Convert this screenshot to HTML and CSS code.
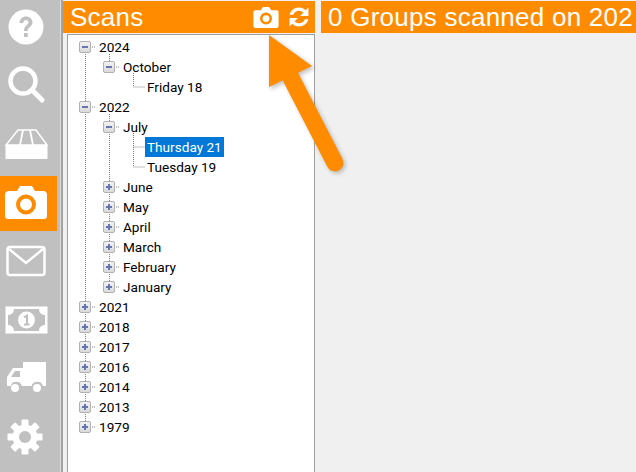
FILE: index.html
```html
<!DOCTYPE html>
<html lang="en">
<head>
<meta charset="utf-8">
<title>Scans</title>
<link rel="stylesheet" href="styles.css">
</head>
<body>
<div class="app">
  <nav class="side">
    <div class="nav-item"><svg width="44" height="44" viewBox="0 0 44 44"><circle cx="22" cy="22" r="17.500" fill="#fff"/><path d="M15.500 18c0-4 3-6.500 6.500-6.500s6.500 2.300 6.500 5.800c0 4.500-4.800 4.700-4.800 8.700h-3.700c0-5.500 4.500-5.700 4.500-8.700 0-1.500-1.100-2.400-2.500-2.400s-2.600 1-2.800 3z" fill="#c0c0c0"/><rect x="20" y="28" width="3.700" height="4" fill="#c0c0c0"/></svg></div>
    <div class="nav-item"><svg width="44" height="44" viewBox="0 0 44 44"><circle cx="19" cy="17" r="12.500" fill="none" stroke="#fff" stroke-width="4.500"/><path d="M28 26l10 10" stroke="#fff" stroke-width="5" stroke-linecap="round"/></svg></div>
    <div class="nav-item"><svg width="46" height="44" viewBox="0 0 46 44"><path d="M15 8h18l11 15H3z" fill="none" stroke="#fff" stroke-width="1.500"/><path d="M20 8l-3 15M27 8l3 15" stroke="#fff" stroke-width="1.800"/><rect x="2.500" y="23" width="42" height="14" fill="#fff"/></svg></div>
    <div class="nav-item is-active"><svg width="46" height="44" viewBox="0 0 46 44"><path d="M6 9h8l3-5h12l3 5h8a4 4 0 0 1 4 4v21a3 3 0 0 1-3 3H5a3 3 0 0 1-3-3V13a4 4 0 0 1 4-4z" fill="#fff"/><circle cx="23" cy="22.500" r="8" fill="none" stroke="#ff8c00" stroke-width="4"/></svg></div>
    <div class="nav-item"><svg width="46" height="44" viewBox="0 0 46 44"><rect x="4.500" y="8" width="37" height="28" rx="2.500" fill="none" stroke="#fff" stroke-width="2.500"/><path d="M6 10l17 14 17-14" fill="none" stroke="#fff" stroke-width="2.500"/></svg></div>
    <div class="nav-item"><svg width="46" height="44" viewBox="0 0 46 44"><path d="M2.500 8.500h42v27h-42z" fill="#fff"/><path d="M11 11h25c0 3.500 2.500 6 6 6v10c-3.500 0-6 2.500-6 6H11c0-3.500-2.500-6-6-6V17c3.500 0 6-2.500 6-6z" fill="#c0c0c0"/><circle cx="23.500" cy="22" r="8.500" fill="#fff"/><path d="M21 19.500l3-2v9M21 26.500h5.500" fill="none" stroke="#c0c0c0" stroke-width="2"/></svg></div>
    <div class="nav-item"><svg width="46" height="44" viewBox="0 0 46 44"><path d="M20 6h23v24h-3a6 6 0 0 0-11.500 0h-9.500a6 6 0 0 0-11.500 0H4V21l6-9h10zM8 21h9v-6h-5z" fill="#fff" fill-rule="evenodd"/><path d="M8 32a4 4 0 1 0 8 0 4 4 0 1 0-8 0zM30 32a4 4 0 1 0 8 0 4 4 0 1 0-8 0z" fill="#fff"/></svg></div>
    <div class="nav-item"><svg width="46" height="44" viewBox="0 0 46 44"><g transform="translate(22 22)" fill="#fff"><circle r="12.500"/><rect x="-3.500" y="-17.500" width="7" height="35" rx="1"/><rect x="-3.500" y="-17.500" width="7" height="35" rx="1" transform="rotate(45)"/><rect x="-3.500" y="-17.500" width="7" height="35" rx="1" transform="rotate(90)"/><rect x="-3.500" y="-17.500" width="7" height="35" rx="1" transform="rotate(135)"/></g><circle cx="22" cy="22" r="6" fill="#c0c0c0"/></svg></div>
  </nav>
  <div class="rule"></div>
  <section class="scans">
    <header class="bar">
      <span class="bar-title">Scans</span>
      <span class="bar-tools">
        <svg width="26" height="21" viewBox="1 1 24 20"><path d="M3 4h5l2-3h6l2 3h5a2 2 0 0 1 2 2v13a2 2 0 0 1-2 2H3a2 2 0 0 1-2-2V6a2 2 0 0 1 2-2z" fill="#fff"/><circle cx="13" cy="12" r="4.500" fill="none" stroke="#ff8c00" stroke-width="2.500"/></svg>
        <svg width="22" height="20" viewBox="2 2 18 18"><path d="M2.500 9C3.500 5 7 2.500 11 2.500c2.500 0 4.500 1 6 2.500l2.500-2.500v7.500H12l3-3c-1-1-2.500-1.700-4-1.700-2.500 0-4.500 1.500-5.200 3.700zM19.500 13c-1 4-4.500 6.500-8.500 6.500-2.500 0-4.500-1-6-2.500l-2.500 2.500V12H10l-3 3c1 1 2.500 1.700 4 1.700 2.500 0 4.500-1.500 5.200-3.700z" fill="#fff"/></svg>
      </span>
    </header>
    <div class="tree">
      <svg class="tree-lines" width="246" height="437" viewBox="0 0 246 437">
        <path d="M17.500 19V391M41.500 19V27M41.500 79V252M65.500 38V52M65.500 98V132M24 12h4M48 32h4M65.500 52h11M24 72h4M48 92h4M65.500 112h11M65.500 132h11M48 152h4M48 172h4M48 192h4M48 212h4M48 232h4M48 252h4M24 272h4M24 292h4M24 312h4M24 332h4M24 352h4M24 372h4M24 392h4" fill="none" stroke="#808080" stroke-dasharray="1 1"/>
      </svg>
      <div class="row d0"><i class="exp minus"></i><span>2024</span></div>
      <div class="row d1"><i class="exp minus"></i><span>October</span></div>
      <div class="row d2"><span>Friday 18</span></div>
      <div class="row d0"><i class="exp minus"></i><span>2022</span></div>
      <div class="row d1"><i class="exp minus"></i><span>July</span></div>
      <div class="row d2"><span class="sel">Thursday 21</span></div>
      <div class="row d2"><span>Tuesday 19</span></div>
      <div class="row d1"><i class="exp plus"></i><span>June</span></div>
      <div class="row d1"><i class="exp plus"></i><span>May</span></div>
      <div class="row d1"><i class="exp plus"></i><span>April</span></div>
      <div class="row d1"><i class="exp plus"></i><span>March</span></div>
      <div class="row d1"><i class="exp plus"></i><span>February</span></div>
      <div class="row d1"><i class="exp plus"></i><span>January</span></div>
      <div class="row d0"><i class="exp plus"></i><span>2021</span></div>
      <div class="row d0"><i class="exp plus"></i><span>2018</span></div>
      <div class="row d0"><i class="exp plus"></i><span>2017</span></div>
      <div class="row d0"><i class="exp plus"></i><span>2016</span></div>
      <div class="row d0"><i class="exp plus"></i><span>2014</span></div>
      <div class="row d0"><i class="exp plus"></i><span>2013</span></div>
      <div class="row d0"><i class="exp plus"></i><span>1979</span></div>
    </div>
  </section>
  <section class="groups">
    <header class="bar"><span class="bar-title">0 Groups scanned on 202</span></header>
  </section>
  <svg class="arrow" width="100" height="150" viewBox="0 0 100 150">
    <g class="arrow-shadow"><path d="M4 5L47 36 4 57z"/><path d="M24 44L70 133" stroke-width="17" stroke-linecap="round"/></g>
    <path d="M4 5L47 36 4 57z" fill="#ff8c00"/>
    <path d="M24 44L70 133" stroke="#ff8c00" stroke-width="17" stroke-linecap="round"/>
  </svg>
</div>
</body>
</html>
```
FILE: styles.css
```css
html, body {
  margin: 0;
  padding: 0;
  height: 100%;
  overflow: hidden;
}
.app {
  position: relative;
  display: flex;
  width: 636px;
  height: 472px;
  background: #f0f0f0;
  font-family: Roboto, "Liberation Sans", sans-serif;
}
.side {
  width: 60px;
  flex: none;
  background: #c0c0c0;
  display: flex;
  flex-direction: column;
  box-sizing: border-box;
  overflow: hidden;
}
.nav-item {
  width: 57px;
  height: 58.500px;
  box-sizing: border-box;
  padding-right: 5px;
  display: flex;
  align-items: center;
  justify-content: center;
  flex: none;
}
.nav-item:first-child {
  margin-top: -2px;
}
.nav-item.is-active {
  background: #ff8c00;
  height: 55px;
  margin: 2.500px 0 1px;
}
.rule {
  width: 3px;
  flex: none;
  background: #a4a4a4;
  border-left: 1px solid #dcdcdc;
  box-sizing: border-box;
}
.scans {
  width: 252px;
  flex: none;
  display: flex;
  flex-direction: column;
}
.groups {
  flex: 1;
  min-width: 0;
  margin-left: 6px;
}
.bar {
  height: 32px;
  margin-top: 1px;
  background: #ff8c00;
  color: #fff;
  display: flex;
  align-items: center;
  justify-content: space-between;
  overflow: hidden;
  white-space: nowrap;
}
.bar-title {
  padding-left: 7px;
  font-family: "Liberation Sans", sans-serif;
  font-size: 26px;
  letter-spacing: .25px;
}
.bar-tools {
  display: flex;
  align-items: center;
  gap: 9px;
  padding-right: 5px;
}
.tree {
  position: relative;
  flex: 1;
  margin: 1px 0 0 4px;
  background: #fff;
  border: 1px solid #a0a0a0;
  border-bottom: 0;
  padding-top: 2px;
  box-sizing: border-box;
  color: #000;
  font-size: 13.600px;
}
.tree-lines {
  position: absolute;
  left: 0;
  top: 0;
}
.row {
  position: relative;
  height: 20px;
  display: flex;
  align-items: center;
}
.row.d0 { padding-left: 11px; }
.row.d1 { padding-left: 35px; }
.row.d2 { padding-left: 77px; }
.row span {
  padding: 0 2px;
  line-height: 20px;
}
.row .sel {
  background: #0078d7;
  color: #fff;
}
.exp {
  position: relative;
  width: 12px;
  height: 12px;
  box-sizing: border-box;
  border: 1px solid #b0b0b0;
  border-radius: 2px;
  background: linear-gradient(#f2f2f2, #dadada);
  margin-right: 6px;
  flex: none;
}
.exp::before {
  content: "";
  position: absolute;
  left: 2px;
  top: 4px;
  width: 6px;
  height: 2px;
  background: #6577ae;
}
.plus::after {
  content: "";
  position: absolute;
  left: 4px;
  top: 2px;
  width: 2px;
  height: 6px;
  background: #6577ae;
}
.arrow {
  position: absolute;
  left: 265px;
  top: 30px;
}
.arrow-shadow {
  fill: #555;
  stroke: #555;
  opacity: .35;
  transform: translate(2px, 2px);
  filter: blur(2px);
}
```
